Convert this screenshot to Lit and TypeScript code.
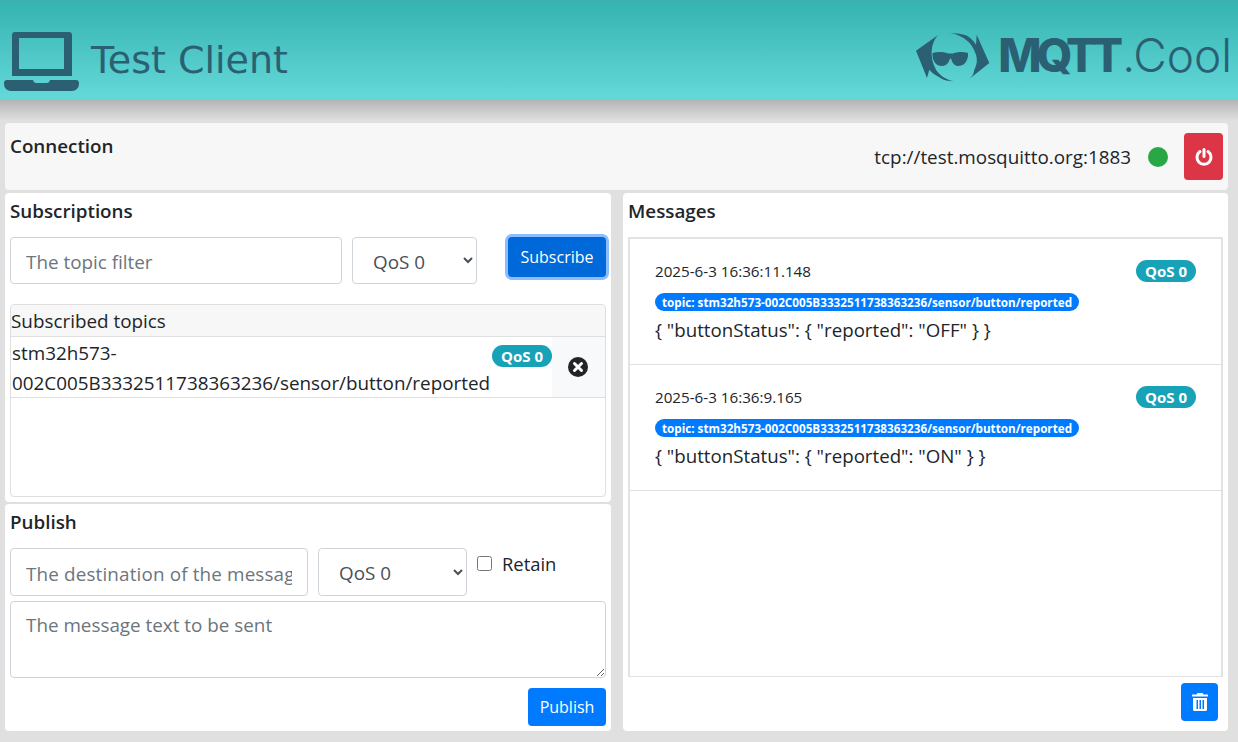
import { LitElement, html, css } from "lit";
import { customElement } from "lit/decorators.js";

const TOPIC = "stm32h573-002C005B3332511738363236/sensor/button/reported";

const messages = [
  { time: "2025-6-3 16:36:11.148", payload: '{ "buttonStatus": { "reported": "OFF" } }' },
  { time: "2025-6-3 16:36:9.165", payload: '{ "buttonStatus": { "reported": "ON" } }' },
];

@customElement("app-root")
export class AppRoot extends LitElement {
  static override styles = css`
    :host {
      display: block;
      height: 742px;
      overflow: hidden;
      background: #e0e0e0;
      font-family: "Open Sans", "Noto Sans", sans-serif;
      font-size: 18.850px;
      color: #212529;
    }

    * {
      box-sizing: border-box;
    }

    .banner {
      height: 99px;
      display: flex;
      align-items: center;
      justify-content: space-between;
      padding: 20px 6px 0 4px;
      color: #2b6073;
      background: linear-gradient(#34b3b1, #64d9d9);
      border-top: 1px solid #40b0b0;
    }

    .brand {
      display: flex;
      align-items: center;
      gap: 12px;
    }

    .laptop {
      width: 75px;
      height: 59px;
      margin-top: 3px;
    }

    .brand-name {
      font-family: "DejaVu Sans", sans-serif;
      font-size: 38px;
    }

    .logo {
      display: flex;
      align-items: center;
      gap: 8px;
      margin-bottom: 5px;
    }

    .logo svg {
      width: 74px;
      height: 50px;
    }

    .logo-text {
      padding-bottom: 6px;
      font-family: "Inter", sans-serif;
      font-size: 46px;
      line-height: 44px;
      white-space: nowrap;
    }

    .logo-text b {
      font-weight: 800;
      letter-spacing: -5px;
    }

    .logo-text span {
      margin-left: 4px;
      font-weight: 300;
    }

    .page {
      display: grid;
      grid-template-columns: 606px 605px;
      grid-template-rows: 68px 309px 227px;
      column-gap: 12px;
      row-gap: 2px;
      padding: 24px 10px 0 5px;
      background: linear-gradient(#b2b2b2, #e0e0e0) no-repeat top / 100% 22px;
    }

    .card {
      background: #fff;
      border-radius: 4px;
      padding: 5px;
    }

    h5 {
      margin: 0;
      font-size: 18.800px;
      font-weight: 600;
      line-height: 26px;
    }

    .connection {
      grid-column: 1 / 3;
      display: flex;
      justify-content: space-between;
      height: 67px;
      background: #f7f7f7;
      padding: 10px 5px;
    }

    .status {
      display: flex;
      align-items: center;
      height: 47px;
    }

    .dot {
      width: 20px;
      height: 20px;
      margin: 0 16px 0 17px;
      border-radius: 50%;
      background: #28a745;
    }

    .btn {
      display: flex;
      align-items: center;
      justify-content: center;
      border: 0;
      border-radius: 4px;
      color: #fff;
      background: #007bff;
      font: inherit;
      font-size: 16px;
    }

    .power {
      width: 39px;
      height: 47px;
      background: #dc3545;
    }

    .messages {
      grid-column: 2;
      grid-row: 2 / 4;
      display: flex;
      flex-direction: column;
    }

    .form-row {
      display: flex;
      align-items: flex-start;
      gap: 10px;
      margin-top: 13px;
    }

    .field {
      height: 47px;
      padding: 2px 15px 0;
      border: 1px solid #ced4da;
      border-radius: 4px;
      background: #fff;
      color: #495057;
      font: inherit;
      outline: none;
    }

    .field::placeholder {
      color: #6c757d;
      opacity: 1;
    }

    select.field {
      padding: 2px 0 0 16px;
    }

    .topic-filter {
      width: 332px;
    }

    .sub-qos {
      width: 125px;
    }

    .subscribe {
      width: 98px;
      height: 40px;
      margin-left: 21px;
      padding-bottom: 2px;
      background: #0069d9;
      box-shadow: 0 0 0 3px #8abdff;
    }

    .topics {
      height: 193px;
      margin-top: 20px;
      border: 1px solid #dfdfdf;
      border-radius: 4px;
    }

    .topics-head {
      height: 32px;
      line-height: 32px;
      background: #f7f7f7;
      border-bottom: 1px solid #dfdfdf;
      border-radius: 4px 4px 0 0;
    }

    .topic-row {
      display: flex;
      height: 61px;
      border-bottom: 1px solid #dfdfdf;
    }

    .topic-name {
      flex: 1;
      min-width: 0;
      padding: 1px 0 0 1px;
      line-height: 30px;
    }

    .topic-row .pill {
      flex: none;
      margin-top: 8px;
    }

    .remove {
      flex: none;
      width: 53px;
      display: flex;
      align-items: center;
      justify-content: center;
      padding-right: 1px;
      background: #f8f9fa;
    }

    .pill {
      display: inline-flex;
      align-items: center;
      justify-content: center;
      border-radius: 12px;
      color: #fff;
      font-weight: 700;
    }

    .qos {
      width: 60px;
      height: 22px;
      font-size: 15px;
      background: #17a2b8;
    }

    .pub-topic {
      width: 298px;
      height: 48px;
      padding-top: 4px;
    }

    .pub-topic::placeholder {
      letter-spacing: 0.15px;
    }

    .pub-qos {
      width: 149px;
      height: 48px;
    }

    .retain {
      display: flex;
      align-items: center;
      height: 22px;
      margin-top: 4px;
      font-size: 18.400px;
    }

    .retain input {
      width: 15px;
      height: 15px;
      margin: 0 10px 0 0;
    }

    textarea.field {
      display: block;
      width: 596px;
      height: 77px;
      margin-top: 5px;
      padding: 10px 15px;
    }

    .publish {
      width: 78px;
      height: 38px;
      margin: 10px 0 0 auto;
      padding-bottom: 1px;
    }

    .message-list {
      flex: 1;
      margin-top: 13px;
      border: 2px solid #e2e2e2;
      border-bottom-width: 1px;
    }

    .message {
      height: 126px;
      padding: 20px 25px 0;
      border-bottom: 1px solid #dfdfdf;
    }

    .message-top {
      display: flex;
      align-items: center;
      justify-content: space-between;
      height: 23px;
      font-size: 15.200px;
    }

    .topic-pill {
      width: 424px;
      height: 18px;
      margin-top: 11px;
      font-size: 11.700px;
      background: #007bff;
      white-space: nowrap;
    }

    .payload {
      margin-top: 3px;
      line-height: 28px;
      font-size: 18.700px;
    }

    .trash {
      width: 37px;
      height: 38px;
      margin: 6px 5px 5px auto;
    }
  `;

  override render() {
    return html`
      <header class="banner">
        <div class="brand">
          <svg class="laptop" viewBox="0 0 75 59" fill="#2b6073">
            <path
              d="M11 0h54a3 3 0 0 1 3 3v41H8V3a3 3 0 0 1 3-3zm4 6v31h45V6zM3 48h26c.500 2 1.500 3 3.500 3h10c2 0 3-1 3.500-3h26a3 3 0 0 1 3 3v1a7 7 0 0 1-7 7H7a7 7 0 0 1-7-7v-1a3 3 0 0 1 3-3z"
              fill-rule="evenodd"
            />
          </svg>
          <span class="brand-name">Test Client</span>
        </div>
        <div class="logo">
          <svg viewBox="0 0 74 50" fill="#2b6073">
            <path d="M0 17.700 21.700 2.300C15 10 13 24 20 36.700c4 6 10 10 18.300 11.600-6 0-11-1-15-4C19 42 15.500 39.500 13.300 36.700L11 45z" />
            <path d="M34.300 0C41 0 46 1 50 2.300c4 2 7.500 5.500 10 9.400l.700-10L73.300 30 51.700 47.300c4-3 6.300-6.500 6.600-10.600 2.700-5 3.300-10 1.700-15C57.500 15 55 11 51.700 8.300 47 4 41 1 34.300 0z" />
            <path d="M16.500 20c5.500-1.500 12.500-1 15.500.500h5c4-1.500 10-2 15-.500v3c-1 6-4 10-10 10-4 0-6-4-7-7.500h-1c-1 3.500-3 7.500-8 7.500-6 0-9-5-9.500-10z" />
          </svg>
          <span class="logo-text"><b>MQTT</b><span>.Cool</span></span>
        </div>
      </header>
      <main class="page">
        <section class="card connection">
          <h5>Connection</h5>
          <div class="status">
            <span>tcp://test.mosquitto.org:1883</span>
            <span class="dot"></span>
            <button class="btn power">
              <svg width="18" height="18" viewBox="0 0 18 18" fill="none" stroke="#fff" stroke-width="3" stroke-linecap="round">
                <path d="M5 3.500a7 7 0 1 0 8 0" />
                <path d="M9 1.500v7" />
              </svg>
            </button>
          </div>
        </section>

        <section class="card">
          <h5>Subscriptions</h5>
          <div class="form-row">
            <input class="field topic-filter" placeholder="The topic filter" />
            <select class="field sub-qos">
              <option>QoS 0</option>
              <option>QoS 1</option>
              <option>QoS 2</option>
            </select>
            <button class="btn subscribe">Subscribe</button>
          </div>
          <div class="topics">
            <div class="topics-head">Subscribed topics</div>
            <div class="topic-row">
              <div class="topic-name">${TOPIC}</div>
              <span class="pill qos">QoS 0</span>
              <div class="remove">
                <svg width="20" height="20" viewBox="0 0 20 20">
                  <circle cx="10" cy="10" r="10" fill="#212529" />
                  <path d="M6.500 6.500l7 7m0-7l-7 7" stroke="#fff" stroke-width="3" stroke-linecap="round" />
                </svg>
              </div>
            </div>
          </div>
        </section>

        <section class="card messages">
          <h5>Messages</h5>
          <div class="message-list">
            ${messages.map(
              (m) => html`
                <div class="message">
                  <div class="message-top">
                    <span>${m.time}</span>
                    <span class="pill qos">QoS 0</span>
                  </div>
                  <div class="pill topic-pill">topic: ${TOPIC}</div>
                  <div class="payload">${m.payload}</div>
                </div>
              `,
            )}
          </div>
          <button class="btn trash">
            <svg width="16" height="18" viewBox="0 0 16 18" fill="#fff">
              <path d="M5.500 0h5l1 1.500H16v2H0v-2h4.500z" />
              <path d="M1 5h14v11.500a1.500 1.500 0 0 1-1.500 1.500h-11A1.500 1.500 0 0 1 1 16.500zm3.500 2v9H6V7zm3 0v9H9V7zm3 0v9H12V7z" fill-rule="evenodd" />
            </svg>
          </button>
        </section>

        <section class="card">
          <h5>Publish</h5>
          <div class="form-row">
            <input class="field pub-topic" placeholder="The destination of the message" />
            <select class="field pub-qos">
              <option>QoS 0</option>
              <option>QoS 1</option>
              <option>QoS 2</option>
            </select>
            <label class="retain"><input type="checkbox" />Retain</label>
          </div>
          <textarea class="field" placeholder="The message text to be sent"></textarea>
          <button class="btn publish">Publish</button>
        </section>
      </main>
    `;
  }
}

declare global {
  interface HTMLElementTagNameMap {
    "app-root": AppRoot;
  }
}
